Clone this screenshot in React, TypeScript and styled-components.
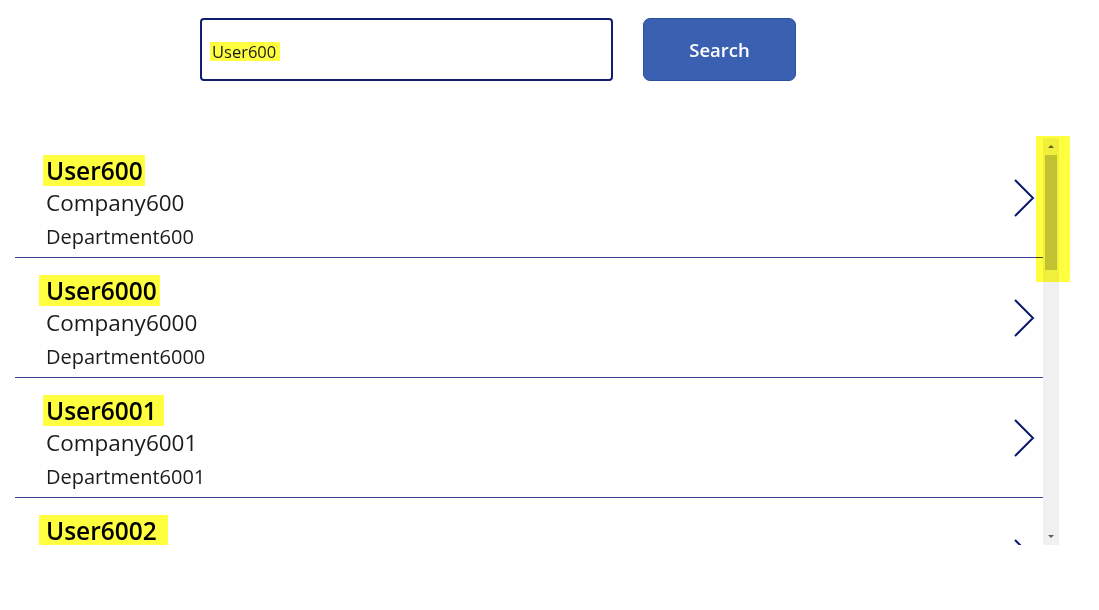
import * as React from "react";
import styled, { createGlobalStyle } from "styled-components";

const GlobalStyle = createGlobalStyle`
  html, body {
    margin: 0;
    padding: 0;
    background: #ffffff;
    font-family: "Open Sans", "Noto Sans", sans-serif;
  }
`;

const Page = styled.div`
  width: 1099px;
  height: 610px;
  position: relative;
  overflow: hidden;
`;

const SearchBar = styled.div`
  display: flex;
  gap: 30px;
  padding: 18px 0 0 200px;
`;

const SearchBox = styled.div`
  box-sizing: border-box;
  width: 413px;
  height: 63px;
  border: 2px solid #0f1f6e;
  border-radius: 4px;
  display: flex;
  align-items: center;
  padding: 3px 0 0 8px;
  font-size: 16.5px;
  color: #1a1a1a;
`;

const Mark = styled.span<{ $l: number; $r: number }>`
  display: inline-block;
  background: #ffff40;
  padding: 0 ${(p) => p.$r}px 0 ${(p) => p.$l}px;
  margin-left: -${(p) => p.$l}px;
`;

const InputMark = styled.span`
  background: #ffff40;
  padding: 0 4px 0 2px;
  line-height: 19px;
  display: inline-block;
`;

const SearchButton = styled.button`
  box-sizing: border-box;
  width: 153px;
  height: 63px;
  background: #3a60b2;
  border: 1px solid #2c4f9e;
  border-radius: 7px;
  color: #ffffff;
  font-family: "Open Sans", sans-serif;
  font-weight: 600;
  font-size: 18.5px;
  padding: 0;
`;

const GalleryWrap = styled.div`
  position: relative;
  margin: 57px 0 0 15px;
  width: 1044px;
  height: 407px;
  display: flex;
`;

const List = styled.div`
  width: 1028px;
  height: 100%;
  overflow: hidden;
`;

const Row = styled.div`
  box-sizing: border-box;
  height: 120px;
  border-bottom: 1px solid #38448e;
  display: flex;
  align-items: flex-start;
  justify-content: space-between;
  padding: 17px 8px 0 31px;
`;

const Texts = styled.div`
  display: flex;
  flex-direction: column;
  color: #1b1b1b;
`;

const Title = styled.div`
  font-size: 24.5px;
  font-weight: 600;
  line-height: 31px;
  color: #000000;
`;

const Company = styled.div`
  font-size: 22.5px;
  line-height: 34px;
`;

const Department = styled.div`
  font-size: 20px;
  line-height: 33px;
`;

const Chevron = styled.svg`
  margin-top: 24px;
  flex: none;
`;

const ScrollTrack = styled.div`
  width: 16px;
  height: 100%;
  background: #f0f0f0;
  display: flex;
  flex-direction: column;
  align-items: center;
`;

const Arrow = styled.div<{ $down?: boolean }>`
  width: 0;
  height: 0;
  border-left: 3px solid transparent;
  border-right: 3px solid transparent;
  ${(p) =>
    p.$down
      ? "border-top: 3px solid #606060; margin-top: auto; margin-bottom: 7px;"
      : "border-bottom: 3px solid #606060; margin-top: 7px;"}
`;

const Thumb = styled.div`
  width: 12px;
  height: 115px;
  margin-top: 7px;
  background: #c1c1c1;
`;

const ScrollHighlight = styled.div`
  position: absolute;
  left: 1021px;
  top: -2px;
  width: 34px;
  height: 146px;
  background: #ffff40;
  mix-blend-mode: multiply;
  pointer-events: none;
`;

const rows = [
  { user: "User600", company: "Company600", dept: "Department600", l: 3, r: 2 },
  { user: "User6000", company: "Company6000", dept: "Department6000", l: 7, r: 3 },
  { user: "User6001", company: "Company6001", dept: "Department6001", l: 3, r: 7 },
  { user: "User6002", company: "Company6002", dept: "Department6002", l: 7, r: 11 },
];

export default function App() {
  return (
    <Page>
      <GlobalStyle />
      <SearchBar>
        <SearchBox>
          <InputMark>User600</InputMark>
        </SearchBox>
        <SearchButton>Search</SearchButton>
      </SearchBar>
      <GalleryWrap>
        <List>
          {rows.map((row) => (
            <Row key={row.user}>
              <Texts>
                <Title>
                  <Mark $l={row.l} $r={row.r}>
                    {row.user}
                  </Mark>
                </Title>
                <Company>{row.company}</Company>
                <Department>{row.dept}</Department>
              </Texts>
              <Chevron width="21" height="38" viewBox="0 0 21 38">
                <polyline
                  points="1,1 19,19 1,37"
                  fill="none"
                  stroke="#0c1a6e"
                  strokeWidth="2"
                />
              </Chevron>
            </Row>
          ))}
        </List>
        <ScrollTrack>
          <Arrow />
          <Thumb />
          <Arrow $down />
        </ScrollTrack>
        <ScrollHighlight />
      </GalleryWrap>
    </Page>
  );
}
